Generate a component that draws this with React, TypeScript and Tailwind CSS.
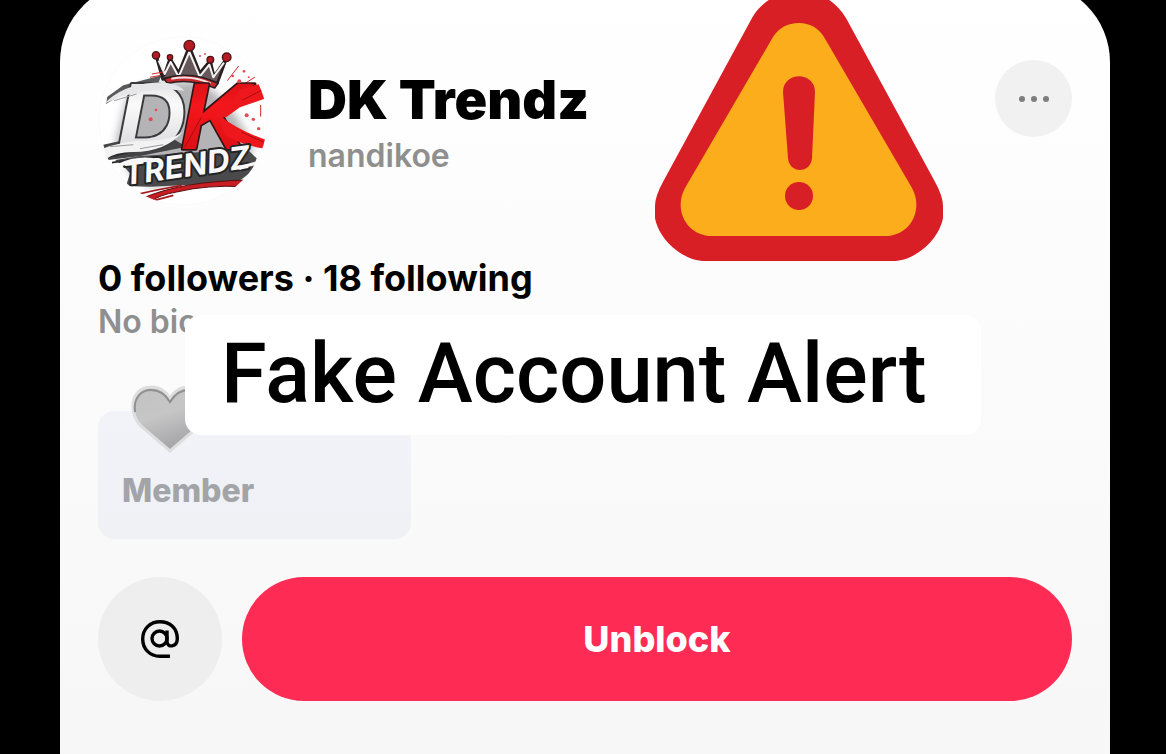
import React from "react";

function BrandLogo() {
  return (
    <svg viewBox="24 18 510 510" className="size-full" role="img" aria-label="DK Trendz logo">
      <defs>
        <clipPath id="disc">
          <circle cx="279" cy="273" r="252" />
        </clipPath>
        <linearGradient id="silver" x1="0" y1="0" x2="0" y2="1">
          <stop offset="0" stopColor="#d2d2d5" />
          <stop offset="0.4" stopColor="#fafafa" />
          <stop offset="0.7" stopColor="#e4e4e6" />
          <stop offset="1" stopColor="#cfcfd2" />
        </linearGradient>
        <linearGradient id="scarlet" x1="0" y1="0" x2="0" y2="1">
          <stop offset="0" stopColor="#c60f14" />
          <stop offset="0.4" stopColor="#f5161a" />
          <stop offset="1" stopColor="#d00e13" />
        </linearGradient>
        <filter id="smoke" x="-20%" y="-20%" width="140%" height="140%">
          <feGaussianBlur stdDeviation="12" />
        </filter>
      </defs>
      <circle cx="279" cy="273" r="252" fill="#ffffff" stroke="#f7f7f7" strokeWidth="2" />
      <g clipPath="url(#disc)">
        <path
          d="M110 210 150 170 220 160 330 150 390 200 440 260 490 345 460 440 180 470 110 420 130 370 75 340Z"
          fill="#77777a"
          opacity="0.55"
          filter="url(#smoke)"
        />
        <path d="M52 200 100 166 170 148 215 136 205 158 120 178 48 222Z" fill="#5a5a5d" />
        <path d="M40 344 140 322 255 330 290 350 150 378 55 390Z" fill="#444447" />
        <path d="M75 390 150 378 250 372 470 356 500 385 485 425 440 458 180 470 108 468 120 430 100 408Z" fill="#4a4a4d" />
        <path d="M60 380 190 350M66 398 130 388" stroke="#2a2a2c" strokeWidth="5" />

        <g stroke="#2a2022" strokeLinejoin="round">
          <path d="M198 78 222 136 240 84 266 128 298 48 330 128 361 90 372 138 410 84 382 160Q300 128 218 148Z" fill="#67595b" strokeWidth="8" />
          <path d="M206 92 224 132 242 96 266 140 298 66 329 140 358 104 370 142 402 98" fill="none" stroke="#f2f2f2" strokeWidth="6" />
          <path d="M222 146Q302 120 384 160L374 174Q302 144 232 160Z" fill="#c9272d" strokeWidth="5" />
          <path d="M244 146Q306 134 362 160" fill="none" stroke="#efe6e6" strokeWidth="6" />
        </g>
        <g fill="#b41b22" stroke="#4a1519" strokeWidth="4">
          <circle cx="298" cy="47" r="16" />
          <circle cx="198" cy="76" r="11" />
          <circle cx="240" cy="82" r="8" />
          <circle cx="361" cy="89" r="10" />
          <circle cx="410" cy="82" r="13" />
        </g>
        <path d="M412 152 446 108M456 166 500 138M512 225v35M186 132 220 126M180 142 212 136" stroke="#d4252b" strokeWidth="3" />

        <text
          x="82"
          y="356"
          fontFamily="'Liberation Sans', sans-serif"
          fontWeight="700"
          fontStyle="italic"
          fontSize="286"
          fill="url(#silver)"
          stroke="#3a3a3d"
          strokeWidth="12"
          strokeLinejoin="round"
          style={{ paintOrder: "stroke" }}
        >
          D
        </text>
        <path d="M42 222Q96 164 190 158 256 154 284 182 236 176 166 184 96 194 42 222Z" fill="#e6e6e8" />
        <path d="M34 358Q90 332 180 332 246 330 278 306 226 366 130 366 76 366 46 388Z" fill="#f2f2f3" />
        <path d="M72 212 140 192M60 350 130 344M150 356 220 344" stroke="#9a9a9d" strokeWidth="3" />

        <text
          x="272"
          y="358"
          fontFamily="'Liberation Sans', sans-serif"
          fontWeight="700"
          fontStyle="italic"
          fontSize="284"
          fill="url(#scarlet)"
          stroke="#2d1417"
          strokeWidth="10"
          strokeLinejoin="round"
          style={{ paintOrder: "stroke" }}
        >
          K
        </text>
        <path
          d="M450 180Q490 164 534 156L530 204 450 232 408 262 376 258ZM384 254Q450 304 535 332L530 356Q465 350 404 316Z"
          fill="#ee171b"
        />
        <path d="M284 352 334 262M454 306 520 336M458 210 520 178" stroke="#a80d12" strokeWidth="3" />

        <g fill="#e54a50">
          <circle cx="330" cy="78" r="3" />
          <circle cx="345" cy="72" r="3" />
          <circle cx="428" cy="138" r="4" />
          <circle cx="448" cy="154" r="6" />
          <circle cx="462" cy="124" r="4" />
          <circle cx="476" cy="142" r="3" />
          <circle cx="490" cy="268" r="5" />
          <circle cx="506" cy="296" r="5" />
          <circle cx="470" cy="256" r="6" />
          <circle cx="182" cy="268" r="6" />
          <circle cx="198" cy="240" r="4" />
        </g>

        <path d="M155 506Q270 454 476 450L462 470Q350 464 260 486 210 494 178 516Z" fill="#c81d22" stroke="#5a1013" strokeWidth="3" />
        <path d="M128 496 200 480 275 466M190 512 250 496" stroke="#a8181c" strokeWidth="5" />
        <text
          x="104"
          y="466"
          transform="rotate(-8 104 466)"
          fontFamily="Inter, 'Liberation Sans', sans-serif"
          fontWeight="700"
          fontStyle="italic"
          fontSize="94"
          fill="#f8f8f8"
          stroke="#242426"
          strokeWidth="12"
          strokeLinejoin="round"
          style={{ paintOrder: "stroke" }}
        >
          TRENDZ
        </text>
        <path d="M84 402Q130 378 190 384L186 396Q130 394 90 410ZM440 412Q490 394 534 388L520 402Q480 406 450 420Z" fill="#f8f8f8" />
      </g>
    </svg>
  );
}

function WarningSign() {
  return (
    <svg viewBox="0 0 288 270" className="block w-full" role="img" aria-label="Warning">
      <path d="M144 -9C164 -9 181 1 191 18L279 180Q288 196 288 206V218C284 240 260 261 238 261H50C28 261 4 240 0 218V206Q0 196 9 180L97 18C107 1 124 -9 144 -9Z" fill="#d81f26" />
      <path d="M144 23Q160 23 169 37L257 188C269 210 255 236 230 236H57C32 236 18 210 30 188L118 37Q127 23 144 23Z" fill="#fbad1b" />
      <path d="M128 92C128 71 160 71 160 92L157 158C156 174 134 174 133 158Z" fill="#d81f26" />
      <circle cx="144" cy="196" r="14" fill="#d81f26" />
    </svg>
  );
}

function Heart() {
  return (
    <svg viewBox="0 0 80 68" className="block w-full" aria-hidden="true">
      <defs>
        <linearGradient id="heartFill" x1="0" y1="0" x2="0.4" y2="1">
          <stop offset="0" stopColor="#c2c2c2" />
          <stop offset="0.5" stopColor="#c6c6c7" />
          <stop offset="1" stopColor="#a5a5a7" />
        </linearGradient>
      </defs>
      <path d="M40 66 12 42C-2 29 0 3 20 2Q33 1 40 13 47 1 60 2C80 3 82 29 68 42Z" fill="url(#heartFill)" stroke="#dededf" strokeWidth="3" />
      <path d="M5 27C3 12 12 5 21 5Q33 5 40 17 47 5 59 5C68 5 77 12 75 27" fill="none" stroke="#8f8f90" strokeWidth="2" />
    </svg>
  );
}

export default function App() {
  return (
    <main className="relative min-h-screen overflow-hidden bg-black pr-14 pl-[60px] font-['Inter','Liberation_Sans',sans-serif]">
      <article className="-mt-[18px] min-h-[calc(100vh+18px)] rounded-t-[80px] bg-linear-to-b from-white to-[#f7f7f8] px-[38px] pt-[54px] pb-[53px]">
        <header className="flex items-start">
          <div className="size-[170px] shrink-0">
            <BrandLogo />
          </div>
          <div className="ml-10 flex-1 pt-9">
            <h1 className="text-[54px] leading-[56px] font-black text-black">DK Trendz</h1>
            <p className="mt-2 text-[32px] leading-10 font-semibold text-[#8f8f8f]">nandikoe</p>
          </div>
          <button
            type="button"
            aria-label="More options"
            className="mt-6 flex size-[77px] shrink-0 items-center justify-center gap-[6px] rounded-full bg-[#f1f1f1]"
          >
            <span className="size-[6px] rounded-full bg-[#7d7d7d]" />
            <span className="size-[6px] rounded-full bg-[#7d7d7d]" />
            <span className="size-[6px] rounded-full bg-[#7d7d7d]" />
          </button>
        </header>

        <p className="mt-[50px] text-[36px] leading-[44px] font-bold text-black">0 followers · 18 following</p>
        <p className="text-[32px] leading-[44px] font-semibold text-[#8f8f8f]">No bio</p>

        <section className="relative mt-[67px] flex h-32 w-[313px] items-end rounded-2xl bg-linear-to-b from-[#f2f3f8] to-[#eff1f5] px-6 pb-7">
          <div className="absolute -top-[26px] left-8 w-20">
            <Heart />
          </div>
          <span className="text-[32px] leading-10 font-extrabold text-[#a3a4a8]">Member</span>
        </section>

        <div className="mt-[38px] flex gap-5">
          <button
            type="button"
            aria-label="Mention"
            className="flex size-[124px] shrink-0 items-center justify-center rounded-full bg-[#eeeeee]"
          >
            <svg viewBox="0 0 40 40" className="size-10" fill="none" stroke="#000000" strokeWidth="3.4" aria-hidden="true">
              <circle cx="19.5" cy="19.5" r="7.5" />
              <path d="M27 11.500V22.500C27 29 37.300 28.500 37.300 19.500C37.300 9 30 2.700 20 2.700C10 2.700 2.700 10 2.700 20C2.700 30 10 37.300 20 37.300H30" />
            </svg>
          </button>
          <button type="button" className="h-[124px] flex-1 rounded-full bg-[#fe2c55] text-[36px] font-extrabold text-white">
            Unblock
          </button>
        </div>
      </article>

      <div className="absolute top-0 left-[655px] w-72">
        <WarningSign />
      </div>
      <p className="absolute top-[315px] left-[185px] flex h-[120px] w-[796px] items-center rounded-2xl bg-white px-9 pb-1 font-['Roboto','Liberation_Sans',sans-serif] text-[83px] leading-none font-medium whitespace-nowrap text-black">
        Fake Account Alert
      </p>
    </main>
  );
}
